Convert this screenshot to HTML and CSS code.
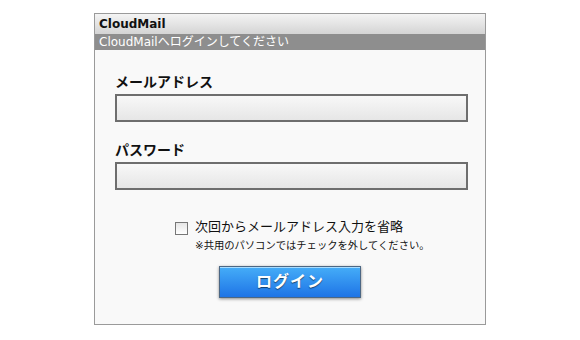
FILE: index.html
```html
<!DOCTYPE html>
<html lang="ja">
<head>
<meta charset="utf-8">
<title>CloudMail</title>
<link rel="stylesheet" href="styles.css">
</head>
<body>
<div class="panel">
  <div class="panel-title">CloudMail</div>
  <div class="panel-sub">CloudMailへログインしてください</div>
  <div class="panel-body">
    <div class="field">
      <div class="label">メールアドレス</div>
      <div class="input"></div>
    </div>
    <div class="field second">
      <div class="label">パスワード</div>
      <div class="input"></div>
    </div>
    <div class="options">
      <span class="check"></span>
      <div class="opt-text">
        <div class="opt-main">次回からメールアドレス入力を省略</div>
        <div class="opt-note">※共用のパソコンではチェックを外してください。</div>
      </div>
    </div>
    <div class="actions">
      <div class="btn">ログイン</div>
    </div>
  </div>
</div>
</body>
</html>
```
FILE: styles.css
```css
html, body {
  margin: 0;
  padding: 0;
  background: #ffffff;
}
body {
  font-family: "DejaVu Sans", "Noto Sans CJK JP", sans-serif;
  color: #000;
}
.panel {
  width: 390px;
  margin: 13px auto 0;
  border: 1px solid #9a9a9a;
  background: #f9f9f9;
}
.panel-title {
  height: 20px;
  line-height: 20px;
  padding-left: 4px;
  font-size: 12px;
  font-weight: bold;
  background: linear-gradient(#f4f4f4, #d4d4d4);
  color: #111;
}
.panel-sub {
  height: 16px;
  line-height: 17px;
  padding-left: 4px;
  font-size: 12px;
  background: #8e8e8e;
  color: #fff;
}
.panel-body {
  padding: 23px 17px 26px 20px;
}
.field.second {
  margin-top: 19px;
}
.label {
  font-size: 14px;
  font-weight: bold;
  line-height: 18px;
  height: 18px;
  margin-bottom: 3px;
  color: #111;
}
.input {
  box-sizing: border-box;
  width: 353px;
  height: 28px;
  border: 2px solid #6e6e6e;
  background: linear-gradient(#f8f8f8, #e6e6e6);
}
.options {
  display: flex;
  margin-top: 29px;
  padding-left: 60px;
}
.check {
  box-sizing: border-box;
  width: 13px;
  height: 13px;
  margin-top: 3px;
  border: 1px solid #777;
  background: linear-gradient(#e6e6e6, #ffffff);
  flex: none;
}
.opt-text {
  margin-left: 7px;
}
.opt-main {
  font-size: 13px;
  line-height: 16px;
  height: 16px;
  color: #111;
}
.opt-note {
  font-size: 10.3px;
  line-height: 14px;
  margin-top: 3px;
  color: #111;
}
.actions {
  display: flex;
  margin-top: 14px;
  padding-left: 104px;
}
.btn {
  box-sizing: border-box;
  width: 142px;
  height: 32px;
  border: 1px solid #4c6784;
  background: linear-gradient(#45adf8, #1e74e6);
  box-shadow: inset 0 1px 0 #a9dcff, 0 1px 3px rgba(0, 0, 0, 0.45);
  color: #fff;
  font-size: 16px;
  font-weight: bold;
  letter-spacing: 1px;
  line-height: 29px;
  text-align: center;
  text-shadow: 0 1px 1px rgba(0, 0, 0, 0.55);
}
```
